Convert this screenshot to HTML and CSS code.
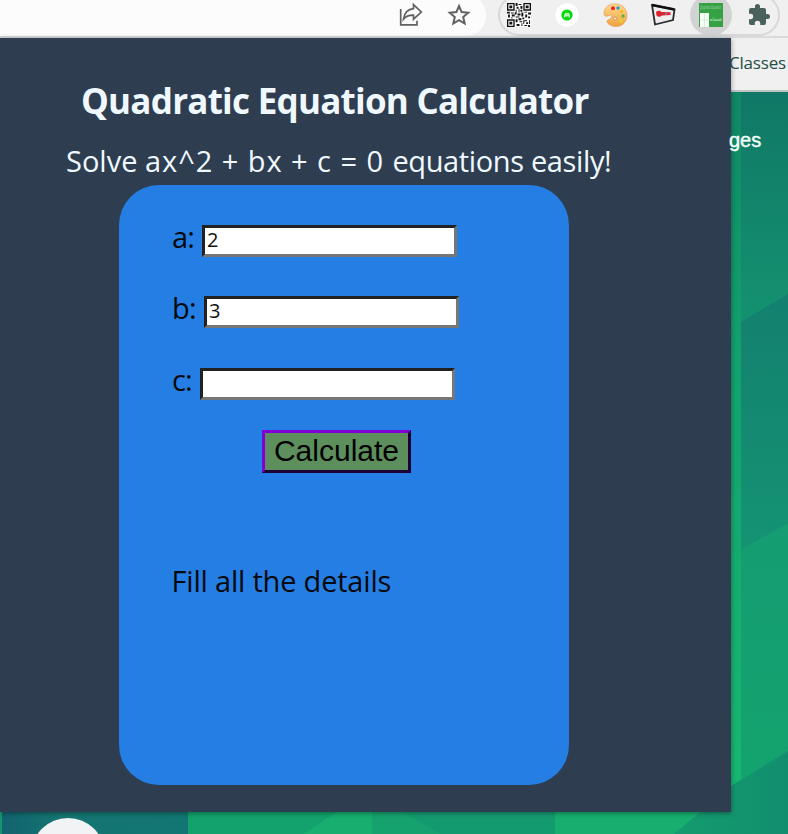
FILE: index.html
```html
<!DOCTYPE html>
<html lang="en">
<head>
<meta charset="utf-8">
<title>Quadratic Equation Calculator</title>
<link rel="stylesheet" href="styles.css">
</head>
<body>
<header class="toolbar">
  <div class="omnibox">
    <svg class="share" width="24" height="24" viewBox="0 0 24 24"><path d="M1.700 7V22.800H18V18.700M14.500 2.600L22.300 10L14.500 17.200V13.200C9.800 13 7 14.200 4.500 17.200C5.300 11.300 8.300 7.300 14.500 6.700Z"/></svg>
    <svg class="star" width="24" height="24" viewBox="0 0 24 24"><path d="M12 3L14.600 9.100L21.200 9.700L16.200 14L17.700 20.500L12 17.100L6.300 20.500L7.800 14L2.800 9.700L9.400 9.100Z"/></svg>
  </div>
  <div class="extensions">
    <div class="slot"><svg width="24" height="24" viewBox="0 0 25 25">
      <path fill="#fff" d="M0 0H25V25H0Z"/>
      <g fill="none" stroke="#111" stroke-width="1.400"><path d="M.7 .7H7.300V7.300H.7ZM17.700 .7H24.300V7.300H17.700ZM.7 17.700H7.300V24.300H.7Z"/></g>
      <path fill="#111" d="M2.500 2.500h3v3h-3zM19.500 2.500h3v3h-3zM2.500 19.500h3v3h-3zM9 0h2v3h-2zM12 1h3v1h-3zM14 3h2v3h-2zM10 4h2v2h-2zM9 7h1v3h-1zM12 6h1v4h-1zM14 7h2v2h-2zM0 9h3v2h-3zM4 10h3v1h-3zM1 12h2v3h-2zM5 12h3v2h-3zM4 15h2v1h-2zM8 10h2v2h-2zM9 14h4v1h-4zM11 11h3v2h-3zM15 10h2v4h-2zM18 9h3v1h-3zM22 10h3v2h-3zM19 12h2v3h-2zM22 14h2v2h-2zM9 17h2v3h-2zM12 16h3v2h-3zM16 15h2v2h-2zM13 19h3v1h-3zM10 22h3v2h-3zM15 21h1v3h-1zM17 18h4v1h-4zM17 19h1v3h-1zM20 20h2v2h-2zM23 18h1v4h-1zM18 23h3v1h-3zM22 23h2v2h-2z"/>
    </svg></div>
    <div class="slot"><svg width="24" height="24" viewBox="0 0 24 24"><circle cx="12" cy="12" r="11.600" fill="#fff"/><circle cx="12" cy="12" r="5.600" fill="#04d80f"/><path d="M9.300 14.300L10 10.800Q12 9.600 14 10.800L14.700 14.300L13.300 13H10.700Z" fill="#9cf5a0" stroke="#e8ffe8" stroke-width=".8"/></svg></div>
    <div class="slot"><svg width="25" height="25" viewBox="0 0 25 25">
      <defs><linearGradient id="wood" x2="0" y2="1"><stop stop-color="#ffd98d"/><stop offset="1" stop-color="#f0a040"/></linearGradient></defs>
      <path d="M13 1C5 0 .5 6 1 11C1.300 13.500 4 13.700 6 12.500C8 11.500 9.500 13 8 15C6.500 17 3.500 16.500 4 19C6 23 13 25 18 22.500C23 20 25 14 23.500 9C22 4 18 1.200 13 1Z" fill="url(#wood)" stroke="#e4a05c" stroke-width=".7"/>
      <circle cx="10" cy="5.300" r="2" fill="#e52d21"/><circle cx="15" cy="5" r="1.700" fill="#219bd9"/><circle cx="18.700" cy="8.500" r="1.600" fill="#f3b91e"/><circle cx="20" cy="13" r="1.700" fill="#62b43c"/><circle cx="18" cy="18" r="2" fill="#e9cf2f"/><circle cx="12" cy="15.500" r="1.500" fill="#f5eee8" stroke="#bc7938" stroke-width=".6"/>
    </svg></div>
    <div class="slot"><svg width="25" height="24" viewBox="0 0 25 24"><path d="M1 2L23.500 6.500L22 17L4 21.500Z" fill="#eee" stroke="#292d2e" stroke-width="1.800"/><path d="M1 2L23.500 6.500" stroke="#111" stroke-width="2.500"/><path d="M5 9Q8 6.500 10.500 9L19.500 9.200V12L11 12.500Q8 15 5.500 12.500Z" fill="#dd222b"/><circle cx="15" cy="10.700" r="1" fill="#58a1ce"/></svg></div>
    <div class="slot active"><svg class="app-icon" width="24" height="24" viewBox="0 0 24 24"><path fill="#36a044" d="M0 0H24V24H0Z"/><path fill="#f6fff6" d="M1 10H10V24H1Z"/><path d="M5.500 10V24M1 17H10" stroke="#c9ddc9" stroke-width=".6"/><text x="1" y="6" textLength="21" lengthAdjust="spacingAndGlyphs" font-size="5" fill="#9bd3a1">Quadratic Equation</text><text x="11" y="18" textLength="11.500" lengthAdjust="spacingAndGlyphs" font-size="4" font-weight="bold" fill="#d9f1db">ax²+bx+c=0</text></svg></div>
    <div class="slot"><svg width="24" height="24" viewBox="0 0 24 24"><path fill="#4b625c" d="M20.500 11H19V7a2 2 0 0 0-2-2h-4V3.500a2.500 2.500 0 0 0-5 0V5H4a2 2 0 0 0-2 2v3.800h1.500a2.700 2.700 0 0 1 0 5.400H2V20a2 2 0 0 0 2 2h3.800v-1.500a2.700 2.700 0 0 1 5.400 0V22H17a2 2 0 0 0 2-2v-4h1.500a2.500 2.500 0 0 0 0-5Z"/></svg></div>
  </div>
</header>
<div class="bookmarks">Classes</div>
<main class="page">
  <svg class="backdrop" width="788" height="742" viewBox="0 92 788 742">
    <defs>
      <linearGradient id="edge" gradientUnits="userSpaceOnUse" x1="0" y1="92" x2="0" y2="834"><stop stop-color="#108765"/><stop offset=".35" stop-color="#13a16e"/><stop offset=".9" stop-color="#17b671"/></linearGradient>
      <linearGradient id="top" x2="0" y2="1"><stop stop-color="#107866"/><stop offset="1" stop-color="#149270"/></linearGradient>
      <linearGradient id="mid" x2="0" y2="1"><stop stop-color="#13806f"/><stop offset="1" stop-color="#149373"/></linearGradient>
      <linearGradient id="low" x2="0" y2="1"><stop stop-color="#159c73"/><stop offset="1" stop-color="#13a56d"/></linearGradient>
      <linearGradient id="teal"><stop stop-color="#12626f"/><stop offset=".3" stop-color="#147570"/><stop offset="1" stop-color="#127672"/></linearGradient>
      <linearGradient id="floor"><stop stop-color="#149b6e"/><stop offset="1" stop-color="#128e6e"/></linearGradient>
    </defs>
    <path fill="#13a16d" d="M188 800H741V834H188Z"/>
    <path fill="url(#edge)" d="M700 92H741V834H700Z"/>
    <path fill="url(#low)" d="M741 510H788V834H741Z"/>
    <path fill="url(#mid)" d="M741 290H788V523L741 550Z"/>
    <path fill="url(#top)" d="M741 92H788V294L741 322Z"/>
    <path fill="#17ae70" d="M337 812H372V834H303ZM555 800H741V834H555Z"/>
    <path fill="#149a6f" d="M372 812H555V834H440L403 812Z"/>
    <path fill="#15a26f" d="M372 812H403L440 834H372Z"/>
    <path fill="url(#edge)" d="M725 760H741V790H725Z"/>
    <path fill="url(#floor)" d="M788 751V834H674L731 786Z"/>
    <path fill="url(#teal)" d="M2 800H188V834H2Z"/><path fill="#13966f" d="M0 800H2V834H0Z"/>
    <circle cx="68" cy="855" r="37" fill="#f1f3f5"/>
  </svg>
  <span class="nav-item">ges</span>
</main>
<section class="popup">
  <h1>Quadratic Equation Calculator</h1>
  <p class="intro">Solve <span class="formula">ax^2 + bx + c = 0 </span><span class="tail">equations easily!</span></p>
  <form class="card">
    <div class="field"><label class="label-a" for="a">a:</label><input id="a" value="2"></div>
    <div class="field"><label class="label-b" for="b">b:</label><input id="b" value="3"></div>
    <div class="field"><label class="label-c" for="c">c:</label><input id="c"></div>
    <button type="button">Calculate</button>
    <p class="result">Fill all the details</p>
  </form>
</section>
</body>
</html>
```
FILE: styles.css
```css
* { box-sizing: border-box; }
body {
  margin: 0;
  width: 788px;
  height: 834px;
  overflow: hidden;
  position: relative;
  font-family: "Open Sans", "Noto Sans", sans-serif;
  background: #f0f0f0;
}
.toolbar {
  height: 38px;
  display: flex;
  overflow: hidden;
  background: #f0f0f0;
  border-bottom: 2px solid #dadada;
}
.omnibox {
  width: 486px;
  height: 41px;
  flex: none;
  margin: -5px 12px 0 0;
  padding: 7px 15px 0 399px;
  display: flex;
  gap: 24px;
  background: #fcfcfc;
  border-radius: 0 20px 20px 0;
}
.omnibox svg { flex: none; fill: none; stroke: #616161; stroke-width: 1.7; }
.omnibox .star { stroke-width: 2; margin-top: 1px; }
.extensions {
  width: 282px;
  height: 42px;
  flex: none;
  margin-top: -6px;
  display: flex;
  border: 2px solid #d8d8d8;
  border-radius: 21px;
}
.slot {
  width: 42px;
  height: 42px;
  flex: none;
  margin: -2px 6px 0 0;
  display: flex;
  align-items: center;
  justify-content: center;
}
.slot:first-child { margin-left: -2px; }
.slot.active { background: #d2d2d2; border-radius: 50%; }
.app-icon { overflow: visible; font-family: "Liberation Sans", sans-serif; }
.bookmarks {
  height: 54px;
  padding: 12px 0 0 729px;
  border-bottom: 2px solid #bfc5c2;
  font-size: 17px;
  line-height: 25px;
  letter-spacing: -0.2px;
  color: #244d48;
}
.page { height: 742px; display: grid; overflow: hidden; }
.backdrop, .nav-item { grid-area: 1 / 1; }
.nav-item {
  z-index: 1;
  margin: 36px 0 0 729px;
  font: 20px/24px "Liberation Sans", Arial, sans-serif;
  color: #f4fffb;
  -webkit-text-stroke: 0.4px #f4fffb;
}
.popup {
  position: absolute;
  top: 38px;
  left: 0;
  width: 731px;
  height: 774px;
  background: #2e3e50;
  box-shadow: 0 1px 5px rgba(0, 0, 0, 0.4);
  color: aliceblue;
}
h1 {
  margin: 0;
  padding: 39px 0 0 81px;
  font-size: 35px;
  line-height: 48px;
  font-weight: 700;
  letter-spacing: -0.75px;
  white-space: nowrap;
}
.intro {
  margin: 0;
  padding: 16px 0 0 66px;
  font-size: 29px;
  line-height: 40px;
  white-space: nowrap;
}
.formula { letter-spacing: 0.95px; }
.tail { letter-spacing: -0.37px; }
.card {
  width: 450px;
  height: 600px;
  margin: 4px 0 0 119px;
  padding: 32px 0 0 53px;
  border-radius: 40px;
  background: #247ee3;
  color: #05090c;
  font-size: 29px;
}
.field { height: 71.4px; display: flex; align-items: flex-start; }
.field label { line-height: 40px; letter-spacing: -0.8px; white-space: nowrap; }
.label-a { width: 30px; }
.label-b { width: 32px; }
.label-c { width: 28px; }
.field input {
  width: 255px;
  height: 32px;
  margin: 8px 0 0;
  padding: 0 2px 3px;
  border: 3px solid;
  border-color: #212121 #767676 #767676 #212121;
  border-radius: 0;
  background: #fff;
  color: #111;
  font: 20px/23px "Open Sans", sans-serif;
}
button {
  display: block;
  width: 149px;
  height: 43px;
  margin: -1.2px 0 0 90px;
  padding: 0 0 1px;
  border: 3px solid;
  border-color: #8000d7 #1e0036 #1e0036 #8000d7;
  border-radius: 0;
  background: #5d8f5d;
  color: #000;
  font: 30px/34px "Liberation Sans", Arial, sans-serif;
}
.result { margin: 88px 0 0 -0.5px; line-height: 40px; letter-spacing: -0.2px; white-space: nowrap; }
```
